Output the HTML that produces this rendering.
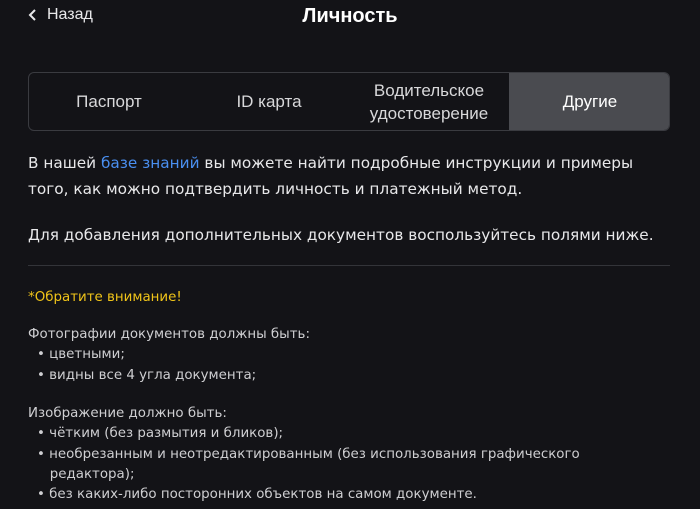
<!DOCTYPE html>
<html><head><meta charset="utf-8"><style>
*{margin:0;padding:0;box-sizing:border-box}
body{width:700px;height:509px;background:#131317;color:#e6e6e8;font-family:"Liberation Sans",sans-serif;overflow:hidden;position:relative}
.back{position:absolute;left:28px;top:6px;font-size:16px;color:#e8e8ea;display:flex;align-items:center}
.back svg{margin-right:9px}
.title{position:absolute;left:0;right:0;top:5px;text-align:center;font-size:20px;font-weight:bold;color:#fff}
.tabs{position:absolute;left:28px;top:72px;width:642px;height:59px;border:1px solid #3a3b40;border-radius:6px;display:flex;overflow:hidden}
.tab{flex:0 0 auto;display:flex;align-items:center;justify-content:center;text-align:center;font-size:17px;color:#d8d8da;line-height:23px}
.tab.a{background:#4a4b50;color:#fff}
.p{position:absolute;left:28px;font-family:"DejaVu Sans",sans-serif;font-size:15.3px;line-height:26px;color:#e8e8ea;white-space:nowrap}
.p a{color:#4a8ff0;text-decoration:none}
.hr{position:absolute;left:28px;width:642px;top:265px;height:1px;background:#333439}
.s{position:absolute;left:28px;font-family:"DejaVu Sans",sans-serif;font-size:13.4px;line-height:20.3px;color:#cfcfd2;white-space:nowrap}
.warn{color:#f0c419}
ul{list-style:none;padding-left:9px}
ul li:before{content:"• ";}
</style></head><body>
<div class="back"><svg width="10" height="14" viewBox="0 0 10 14"><path d="M7 2L2 7l5 5" stroke="#e8e8ea" stroke-width="2" fill="none"/></svg>Назад</div>
<div class="title">Личность</div>
<div class="tabs">
<div class="tab" style="width:160px">Паспорт</div>
<div class="tab" style="width:160px">ID карта</div>
<div class="tab" style="width:160px">Водительское<br>удостоверение</div>
<div class="tab a" style="width:162px">Другие</div>
</div>
<div class="p" style="top:150px">В нашей <a>базе знаний</a> вы можете найти подробные инструкции и примеры<br>того, как можно подтвердить личность и платежный метод.</div>
<div class="p" style="top:222px">Для добавления дополнительных документов воспользуйтесь полями ниже.</div>
<div class="hr"></div>
<div class="s warn" style="top:288px">*Обратите внимание!</div>
<div class="s" style="top:325px">Фотографии документов должны быть:<ul><li>цветными;</li><li>видны все 4 угла документа;</li></ul></div>
<div class="s" style="top:404px">Изображение должно быть:<ul><li>чётким (без размытия и бликов);</li><li>необрезанным и неотредактированным (без использования графического<br>&nbsp;&nbsp;&nbsp;редактора);</li><li>без каких-либо посторонних объектов на самом документе.</li></ul></div>
</body></html>
